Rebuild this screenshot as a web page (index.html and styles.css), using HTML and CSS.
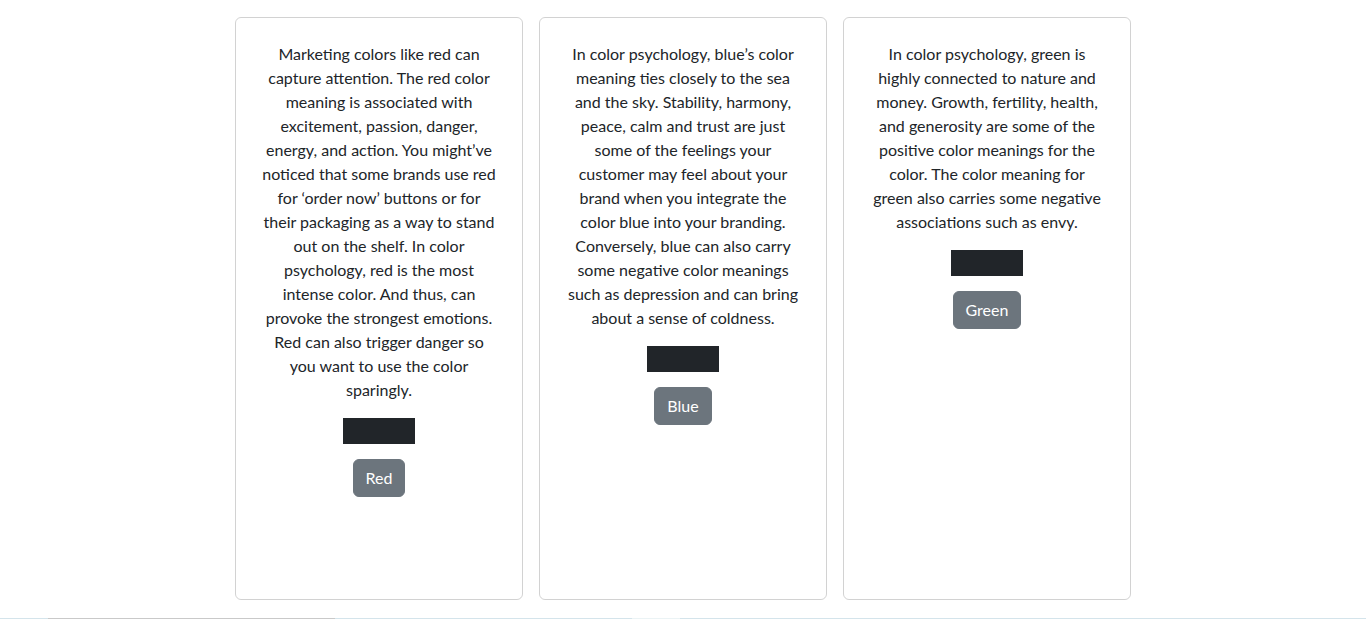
FILE: index.html
```html
<!DOCTYPE html>
<html lang="en">
<head>
<meta charset="utf-8">
<title>Color meanings</title>
<link rel="stylesheet" href="styles.css">
</head>
<body>
<main class="page">
  <div class="cards">
    <section class="card">
      <p class="card-text">Marketing colors like red can capture attention. The red color meaning is associated with excitement, passion, danger, energy, and action. You might’ve noticed that some brands use red for ‘order now’ buttons or for their packaging as a way to stand out on the shelf. In color psychology, red is the most intense color. And thus, can provoke the strongest emotions. Red can also trigger danger so you want to use the color sparingly.</p>
      <div class="swatch"></div>
      <button class="btn" type="button">Red</button>
    </section>
    <section class="card">
      <p class="card-text">In color psychology, blue’s color meaning ties closely to the sea and the sky. Stability, harmony, peace, calm and trust are just some of the feelings your customer may feel about your brand when you integrate the color blue into your branding. Conversely, blue can also carry some negative color meanings such as depression and can bring about a sense of coldness.</p>
      <div class="swatch"></div>
      <button class="btn" type="button">Blue</button>
    </section>
    <section class="card">
      <p class="card-text">In color psychology, green is highly connected to nature and money. Growth, fertility, health, and generosity are some of the positive color meanings for the color. The color meaning for green also carries some negative associations such as envy.</p>
      <div class="swatch"></div>
      <button class="btn" type="button">Green</button>
    </section>
  </div>
</main>
<div class="bottom-line"></div>
</body>
</html>
```

FILE: styles.css
```css
html, body {
  margin: 0;
  padding: 0;
  background: #fff;
}

body {
  font-family: Lato, "Segoe UI", "Liberation Sans", sans-serif;
  font-size: 16px;
  line-height: 24px;
  color: #212529;
  height: 619px;
  overflow: hidden;
  display: flex;
  flex-direction: column;
}

.page {
  padding-top: 17px;
  height: 601px;
  box-sizing: border-box;
}

.cards {
  display: flex;
  gap: 16px;
  width: 896px;
  margin: 0 auto;
}

.card {
  width: 288px;
  height: 583px;
  box-sizing: border-box;
  border: 1px solid rgba(0, 0, 0, 0.175);
  border-radius: 6px;
  padding: 24px;
  display: flex;
  flex-direction: column;
  align-items: center;
  text-align: center;
}

.card-text {
  margin: 0 0 16px;
}

.swatch {
  width: 72px;
  height: 26px;
  background: #212529;
  margin-bottom: 15px;
}

.btn {
  font-family: inherit;
  font-size: 16px;
  line-height: 24px;
  color: #fff;
  background: #6c757d;
  border: 1px solid #6c757d;
  border-radius: 6px;
  padding: 6px 12px;
  cursor: pointer;
}

.bottom-line {
  margin-top: auto;
  height: 1px;
  background: linear-gradient(to right,
    #d4e4eb 0, #d4e4eb 48px,
    #c9c9c9 48px, #c9c9c9 335px,
    #d4e4eb 335px, #d4e4eb 632px,
    #ebf3f5 632px, #ebf3f5 680px,
    #d4e4eb 680px, #d4e4eb 100%);
}
```
